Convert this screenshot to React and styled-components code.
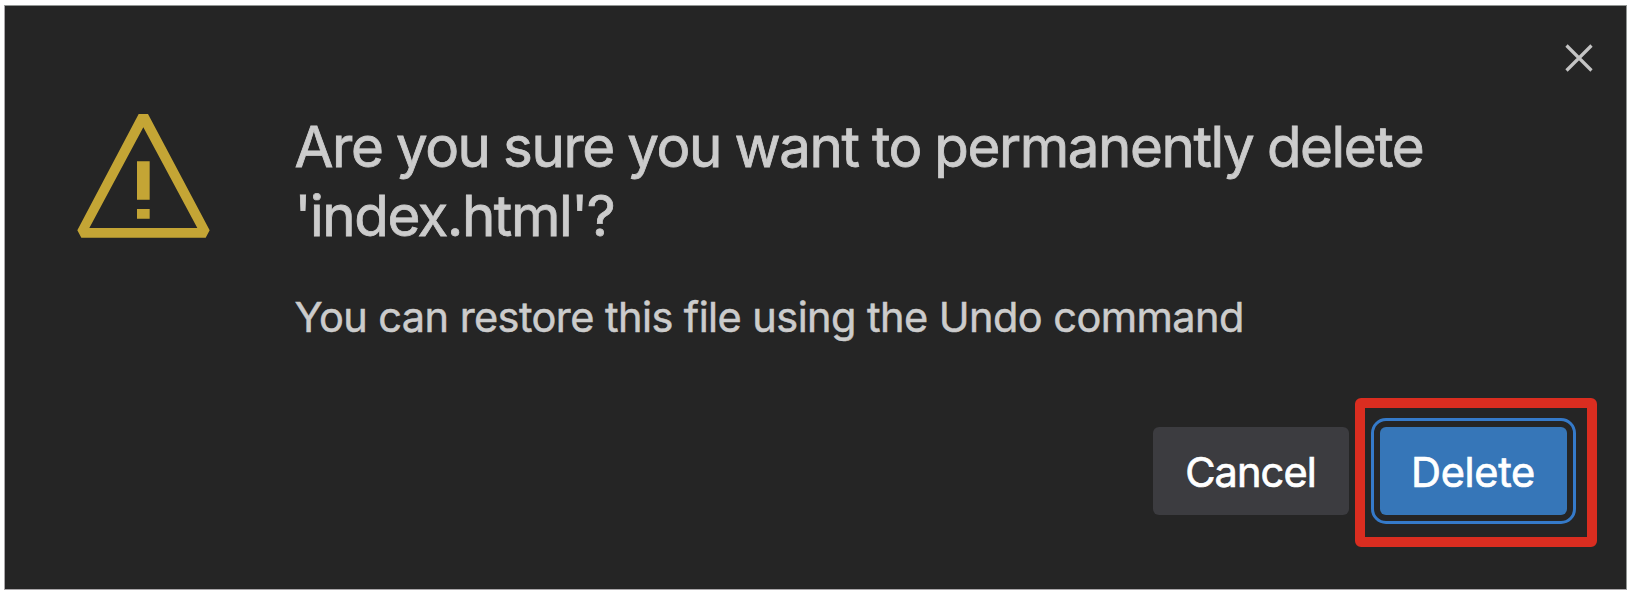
import React from "react";
import styled, { createGlobalStyle } from "styled-components";

const GlobalStyle = createGlobalStyle`
  * { box-sizing: border-box; }
  body { margin: 0; background: #fff; overflow: hidden; }
`;

const Page = styled.main`
  width: 1630px;
  height: 594px;
  padding: 5px 3px 4px 4px;
  background: #fff;
`;

const Dialog = styled.section`
  display: flex;
  flex-direction: column;
  width: 1623px;
  height: 585px;
  border: 1px solid;
  border-color: #929694 #929694 #aaa7aa #aaa7aa;
  background: #252525;
  color: #cccccc;
  font-family: Inter, "Liberation Sans", sans-serif;
`;

const Toolbar = styled.header`
  display: flex;
  justify-content: flex-end;
  height: 96px;
  padding: 37px 32px 0 0;
`;

const CloseButton = styled.button`
  display: block;
  width: 30px;
  height: 30px;
  padding: 0;
  border: 0;
  background: none;
  color: #c4c4c4;
`;

const Icon = styled.svg`
  display: block;
`;

const Body = styled.div`
  display: flex;
  align-items: flex-start;
  height: 324.5px;
  padding-left: 72px;
`;

const IconSlot = styled.div`
  flex: none;
  padding-top: 12px;
`;

const Message = styled.div`
  padding: 10px 0 0 84.5px;
`;

const Title = styled.h1`
  margin: 0;
  font-size: 56.5px;
  font-weight: 400;
  line-height: 69px;
  letter-spacing: -1.43px;
  word-spacing: -1px;
  white-space: nowrap;
  -webkit-text-stroke: 0.8px currentColor;
`;

const Detail = styled.p`
  margin: 39px 0 0;
  font-size: 41.5px;
  font-weight: 400;
  line-height: 56px;
  letter-spacing: -0.57px;
  white-space: nowrap;
  -webkit-text-stroke: 0.5px currentColor;
`;

const Actions = styled.footer`
  display: flex;
  justify-content: flex-end;
  gap: 31px;
  padding-right: 59px;
`;

const Button = styled.button`
  width: ${(p) => p.$width}px;
  height: 88.5px;
  padding: 3px 1px 0 0;
  border: 0;
  border-radius: 6px;
  background: ${(p) => (p.$primary ? "#3676b8" : "#3c3c40")};
  color: #fff;
  font: 400 41.5px/84px Inter, "Liberation Sans", sans-serif;
  letter-spacing: ${(p) => (p.$primary ? "-0.3px" : "-0.9px")};
  -webkit-text-stroke: 0.7px currentColor;
  ${(p) => p.$primary && "outline: 3px solid #357ac9; outline-offset: 6px;"}
`;

const Highlighted = styled.div`
  position: relative;
  display: flex;
`;

const HighlightFrame = styled.div`
  position: absolute;
  inset: -29px -30px -32px -25px;
  border: 10px solid #da2d20;
  border-radius: 6px;
  pointer-events: none;
`;

function WarningIcon() {
  return (
    <Icon width="133" height="124" viewBox="231 342 399 372" aria-hidden="true">
      <path
        fill="#c4a535"
        fillRule="evenodd"
        d="M416 342H444L629 691L617 713H244L232 691ZM430 382L268 684H592ZM411 484H449V599H411ZM411 627H449V656H411Z"
      />
    </Icon>
  );
}

function CloseIcon() {
  return (
    <Icon width="30" height="30" viewBox="0 0 30 30" aria-hidden="true">
      <path d="M2.5 2.5L27.5 27.5M27.5 2.5L2.5 27.5" fill="none" stroke="currentColor" strokeWidth="3.2" />
    </Icon>
  );
}

export default function App() {
  return (
    <Page>
      <GlobalStyle />
      <Dialog role="alertdialog">
        <Toolbar>
          <CloseButton aria-label="Close">
            <CloseIcon />
          </CloseButton>
        </Toolbar>
        <Body>
          <IconSlot>
            <WarningIcon />
          </IconSlot>
          <Message>
            <Title>
              Are you sure you want to permanently delete
              <br />
              'index.html'?
            </Title>
            <Detail>You can restore this file using the Undo command</Detail>
          </Message>
        </Body>
        <Actions>
          <Button $width={196}>Cancel</Button>
          <Highlighted>
            <Button $width={187} $primary>
              Delete
            </Button>
            <HighlightFrame />
          </Highlighted>
        </Actions>
      </Dialog>
    </Page>
  );
}
